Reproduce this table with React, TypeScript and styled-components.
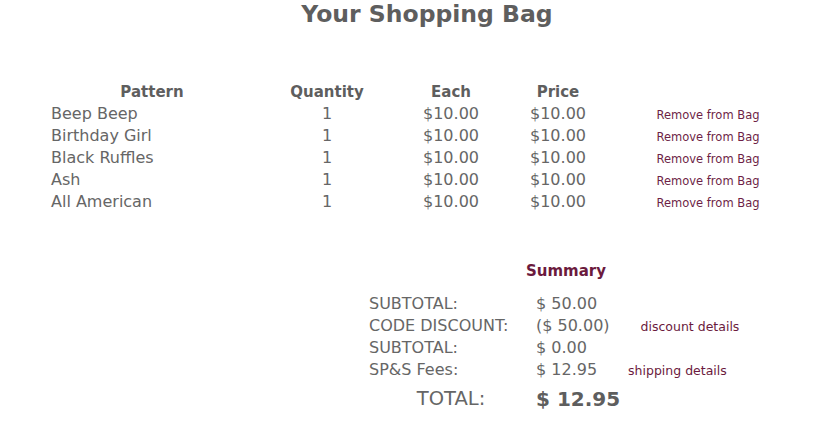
import styled, { createGlobalStyle } from "styled-components";

const items = [
  { name: "Beep Beep", qty: 1, each: "$10.00", price: "$10.00" },
  { name: "Birthday Girl", qty: 1, each: "$10.00", price: "$10.00" },
  { name: "Black Ruffles", qty: 1, each: "$10.00", price: "$10.00" },
  { name: "Ash", qty: 1, each: "$10.00", price: "$10.00" },
  { name: "All American", qty: 1, each: "$10.00", price: "$10.00" },
];

const summary = [
  { label: "SUBTOTAL:", value: "$ 50.00" },
  { label: "CODE DISCOUNT:", value: "($ 50.00)", link: "discount details" },
  { label: "SUBTOTAL:", value: "$ 0.00" },
  { label: "SP&S Fees:", value: "$ 12.95", link: "shipping details" },
];

function App() {
  return (
    <>
      <GlobalStyle />
      <Page>
        <Title>Your Shopping Bag</Title>
        <BagTable>
          <HeadCell>Pattern</HeadCell>
          <HeadCell>Quantity</HeadCell>
          <HeadCell>Each</HeadCell>
          <HeadCell>Price</HeadCell>
          <HeadCell />
          {items.map((item) => (
            <Row key={item.name}>
              <Cell $align="left">{item.name}</Cell>
              <Cell>{item.qty}</Cell>
              <Cell>{item.each}</Cell>
              <Cell>{item.price}</Cell>
              <RemoveLink href="#">Remove from Bag</RemoveLink>
            </Row>
          ))}
        </BagTable>
        <Summary>
          <SummaryTitle>Summary</SummaryTitle>
          <SummaryRows>
            {summary.map((s, i) => (
              <SummaryRow key={i}>
                <Label>{s.label}</Label>
                <Value>
                  {s.value}
                  {s.link && <DetailLink href="#">{s.link}</DetailLink>}
                </Value>
              </SummaryRow>
            ))}
            <TotalRow>
              <TotalLabel>TOTAL:</TotalLabel>
              <TotalValue>$ 12.95</TotalValue>
            </TotalRow>
          </SummaryRows>
        </Summary>
      </Page>
    </>
  );
}

const GlobalStyle = createGlobalStyle`
  body {
    margin: 0;
    background: #fff;
    font-family: "DejaVu Sans", Verdana, sans-serif;
    color: #666;
  }
`;

const Page = styled.div`
  width: 836px;
  display: flex;
  flex-direction: column;
`;

const Title = styled.h1`
  margin: 0;
  height: 28px;
  line-height: 28px;
  text-align: center;
  padding-left: 18px;
  font-size: 23.5px;
  font-weight: bold;
  color: #5e5e5e;
`;

const BagTable = styled.div`
  margin: 53px 0 0 51px;
  display: grid;
  grid-template-columns: 202px 148px 100px 114px 186px;
  grid-auto-rows: 22px;
`;

const HeadCell = styled.div`
  text-align: center;
  font-size: 15px;
  font-weight: bold;
  line-height: 22px;
  color: #5e5e5e;
`;

const Row = styled.div`
  display: contents;
`;

const Cell = styled.div<{ $align?: string }>`
  text-align: ${(p) => p.$align || "center"};
  font-size: 16px;
  line-height: 22px;
  color: #666;
`;

const RemoveLink = styled.a`
  text-align: center;
  font-size: 11.5px;
  line-height: 24px;
  color: #6e1f47;
  text-decoration: none;
`;

const Summary = styled.div`
  margin: 47px 0 0 366px;
  width: 400px;
  display: flex;
  flex-direction: column;
`;

const SummaryTitle = styled.div`
  text-align: center;
  font-size: 15px;
  font-weight: bold;
  line-height: 22px;
  color: #6b1a3d;
`;

const SummaryRows = styled.div`
  margin-top: 11px;
  display: flex;
  flex-direction: column;
`;

const SummaryRow = styled.div`
  display: grid;
  grid-template-columns: 170px 1fr;
  height: 22px;
  line-height: 22px;
  font-size: 16px;
  color: #666;
`;

const Label = styled.div`
  padding-left: 3px;
`;

const Value = styled.div`
  display: flex;
  align-items: baseline;
`;

const DetailLink = styled.a`
  margin-left: 31px;
  font-size: 12.5px;
  color: #6b1a3d;
  text-decoration: none;
`;

const TotalRow = styled.div`
  margin-top: 5px;
  display: grid;
  grid-template-columns: 170px 1fr;
  height: 26px;
  line-height: 26px;
`;

const TotalLabel = styled.div`
  text-align: center;
  font-size: 19.5px;
  color: #666;
`;

const TotalValue = styled.div`
  font-size: 20px;
  font-weight: bold;
  color: #5e5e5e;
`;

export default App;
